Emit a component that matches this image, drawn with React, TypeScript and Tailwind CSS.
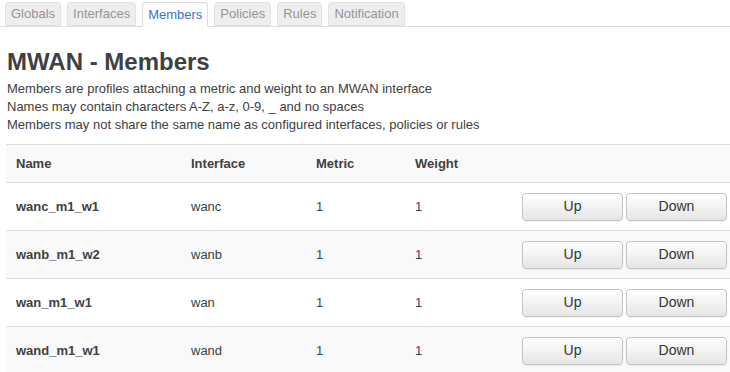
import React from "react";

const tabs = ["Globals", "Interfaces", "Members", "Policies", "Rules", "Notification"];

const members = [
  { name: "wanc_m1_w1", iface: "wanc", metric: "1", weight: "1" },
  { name: "wanb_m1_w2", iface: "wanb", metric: "1", weight: "1" },
  { name: "wan_m1_w1", iface: "wan", metric: "1", weight: "1" },
  { name: "wand_m1_w1", iface: "wand", metric: "1", weight: "1" },
];

function Btn({ label }: { label: string }) {
  return (
    <button className="w-[101px] h-[28px] rounded-[4px] border border-[#c4c4c4] bg-gradient-to-b from-white to-[#e6e6e6] text-[14px] text-[#333] shadow-[0_1px_1px_rgba(0,0,0,0.06)]">
      {label}
    </button>
  );
}

export default function App() {
  return (
    <div className="w-[730px] h-[372px] overflow-hidden bg-white font-['Liberation_Sans',Arial,sans-serif] text-[#404040]">
      <ul className="flex gap-[6px] pl-[5px] pt-[2px] border-b border-[#ddd] h-[27px]">
        {tabs.map((t) => {
          const active = t === "Members";
          return (
            <li
              key={t}
              className={
                active
                  ? "h-[25px] px-[5px] flex items-center text-[13px] rounded-t-[4px] border border-[#ddd] border-b-white bg-white text-[#3b6fd6]"
                  : "h-[24px] px-[5px] flex items-center text-[13px] rounded-t-[4px] border border-[#e2e2e2] bg-[#eeeeee] text-[#959595]"
              }
            >
              {t}
            </li>
          );
        })}
      </ul>

      <div className="px-[7px]">
        <h2 className="mt-[21px] text-[24px] leading-[28px] font-bold text-[#404040]">MWAN - Members</h2>
        <div className="mt-[4px] text-[13px] leading-[18px]">
          <p>Members are profiles attaching a metric and weight to an MWAN interface</p>
          <p>Names may contain characters A-Z, a-z, 0-9, _ and no spaces</p>
          <p>Members may not share the same name as configured interfaces, policies or rules</p>
        </div>
      </div>

      <div className="ml-[6px] mt-[10px] border-t border-[#ddd]">
        <div className="grid grid-cols-[175px_125px_99px_1fr] h-[38px] items-center bg-[#f9f9f9] border-b border-[#ddd] text-[13px] font-bold">
          <div className="pl-[10px]">Name</div>
          <div className="pl-[10px]">Interface</div>
          <div className="pl-[10px]">Metric</div>
          <div className="pl-[10px]">Weight</div>
        </div>
        {members.map((m, i) => (
          <div
            key={m.name}
            className={
              "grid grid-cols-[175px_125px_99px_1fr] h-[48px] items-center border-b border-[#ddd] text-[13px] " +
              (i % 2 === 1 ? "bg-[#f9f9f9]" : "bg-white")
            }
          >
            <div className="pl-[10px] font-bold">{m.name}</div>
            <div className="pl-[10px]">{m.iface}</div>
            <div className="pl-[10px]">{m.metric}</div>
            <div className="pl-[10px] flex items-center">
              <span>{m.weight}</span>
              <div className="ml-auto mr-[3px] flex gap-[3px]">
                <Btn label="Up" />
                <Btn label="Down" />
              </div>
            </div>
          </div>
        ))}
      </div>
    </div>
  );
}
